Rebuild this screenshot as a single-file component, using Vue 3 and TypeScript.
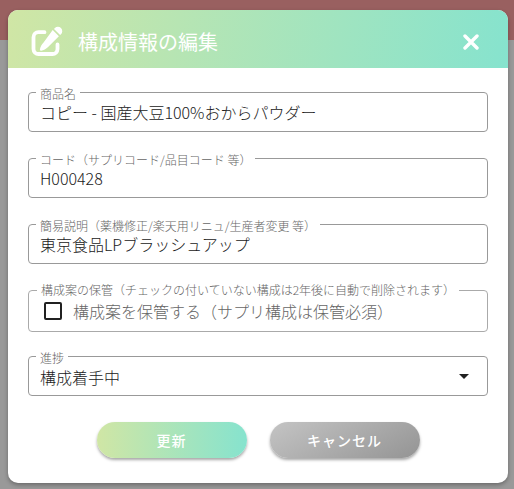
<script setup lang="ts">
import { ref } from 'vue'

interface TextField {
  id: string
  label: string
  value: string
}

const fields = ref<TextField[]>([
  { id: 'name', label: '商品名', value: 'コピー - 国産大豆100%おからパウダー' },
  { id: 'code', label: 'コード（サプリコード/品目コード 等）', value: 'H000428' },
  { id: 'note', label: '簡易説明（薬機修正/楽天用リニュ/生産者変更 等）', value: '東京食品LPブラッシュアップ' },
])
const keep = ref(false)
const progress = ref('構成着手中')
</script>

<template>
  <div class="page">
    <form class="dialog" @submit.prevent>
      <header class="header">
        <svg class="edit-icon" viewBox="0 0 32 32" aria-hidden="true">
          <path d="M13.5 6.2H7.5a5 5 0 0 0-5 5V23a5 5 0 0 0 5 5h14a5 5 0 0 0 5-5V18.5" fill="none" stroke="currentColor" stroke-width="3.8" stroke-linecap="round" />
          <path d="M21.7 4l6.2 6.2-10.8 10.8c-1.9 1.9-4.6 3.4-7 3.7-.8.1-1.3-.4-1.2-1.2.3-2.4 1.8-5.1 3.7-7z" fill="currentColor" />
          <path d="M23 2.9l.9-.8a4.3 4.3 0 0 1 6.1 6.1l-.9.9z" fill="currentColor" />
        </svg>
        <h1 class="title">構成情報の編集</h1>
        <button class="close" type="button" aria-label="閉じる">
          <svg viewBox="0 0 16 16" aria-hidden="true">
            <path d="M2 2l12 12M14 2L2 14" stroke="currentColor" stroke-width="3.4" stroke-linecap="round" />
          </svg>
        </button>
      </header>

      <div class="body">
        <div v-for="field in fields" :key="field.id" class="field">
          <label class="label" :for="field.id">{{ field.label }}</label>
          <input :id="field.id" v-model="field.value" class="control" type="text" />
        </div>

        <div class="field keep" role="group" aria-labelledby="keep-title">
          <span id="keep-title" class="label">構成案の保管（チェックの付いていない構成は2年後に自動で削除されます）</span>
          <label class="check">
            <input v-model="keep" class="box" type="checkbox" />
            <span>構成案を保管する（サプリ構成は保管必須）</span>
          </label>
        </div>

        <div class="field">
          <label class="label" for="progress">進捗</label>
          <select id="progress" v-model="progress" class="control select">
            <option>構成着手中</option>
          </select>
          <svg class="arrow" viewBox="0 0 10 5" aria-hidden="true">
            <path d="M0 0h10L5 5z" fill="currentColor" />
          </svg>
        </div>
      </div>

      <footer class="actions">
        <button class="button primary" type="submit">更新</button>
        <button class="button cancel" type="button">キャンセル</button>
      </footer>
    </form>
  </div>
</template>

<style>
body {
  margin: 0;
  background: #999;
}
</style>

<style scoped>
.page {
  box-sizing: border-box;
  min-height: 100vh;
  padding: 10px 6px 6px 8px;
  background: linear-gradient(#996060 40px, #999 40px);
  font-family: 'Noto Sans CJK JP', 'Noto Sans', sans-serif;
  font-weight: 300;
  color: #212121;
}
.dialog {
  overflow: hidden;
  border-radius: 10px;
  background: #fff;
  box-shadow: 0 2px 4px rgba(0, 0, 0, 0.3);
}
.header {
  display: flex;
  align-items: center;
  box-sizing: border-box;
  height: 58px;
  padding: 6px 24px 0 23px;
  background: linear-gradient(100deg, #d0e6a5, #86e3ce);
  color: #fff;
}
.edit-icon {
  width: 32px;
  height: 32px;
}
.title {
  flex: 1;
  margin: 0 0 0 15px;
  font-size: 20px;
  font-weight: 400;
  line-height: 28px;
}
.close {
  display: flex;
  margin: 0;
  padding: 5px;
  border: 0;
  background: none;
  color: inherit;
  cursor: pointer;
}
.close svg {
  width: 16px;
  height: 16px;
}
.body {
  display: flex;
  flex-direction: column;
  gap: 26px;
  padding: 24px 20px 0;
}
.field {
  position: relative;
}
.label {
  position: absolute;
  top: -6px;
  left: 8px;
  padding: 0 4px;
  background: #fff;
  color: #666;
  font-size: 12px;
  line-height: 16px;
  white-space: nowrap;
}
.control {
  display: block;
  box-sizing: border-box;
  width: 100%;
  height: 40px;
  margin: 0;
  padding: 2px 11px;
  border: 1px solid #999;
  border-radius: 4px;
  background: #fff;
  color: inherit;
  font: inherit;
  font-size: 16px;
}
.select {
  appearance: none;
  padding-top: 4px;
}
.arrow {
  position: absolute;
  top: 18px;
  right: 19px;
  width: 10px;
  height: 5px;
  pointer-events: none;
}
.keep {
  box-sizing: border-box;
  height: 42px;
  margin-bottom: -2px;
  border: 1px solid #aaa;
  border-radius: 4px;
}
.keep .label {
  top: -9px;
}
.check {
  display: flex;
  align-items: center;
  gap: 11px;
  height: 40px;
  padding-left: 15px;
  color: #666;
  font-size: 16px;
}
.box {
  appearance: none;
  box-sizing: border-box;
  width: 18px;
  height: 18px;
  margin: 0;
  border: 2px solid #212121;
  border-radius: 2px;
}
.box:checked {
  background: #86e3ce;
}
.actions {
  display: flex;
  justify-content: center;
  gap: 23px;
  padding: 26px 20px 25px;
}
.button {
  width: 150px;
  height: 36px;
  padding: 0;
  border: 0;
  border-radius: 18px;
  box-shadow: 0 2px 3px rgba(0, 0, 0, 0.35);
  color: #fff;
  font: inherit;
  font-size: 14px;
  font-weight: 500;
  letter-spacing: 1px;
  cursor: pointer;
}
.primary {
  background: linear-gradient(90deg, #d0e6a5, #86e3ce);
}
.cancel {
  background: linear-gradient(150deg, #c4c4c4, #949494);
}
</style>
